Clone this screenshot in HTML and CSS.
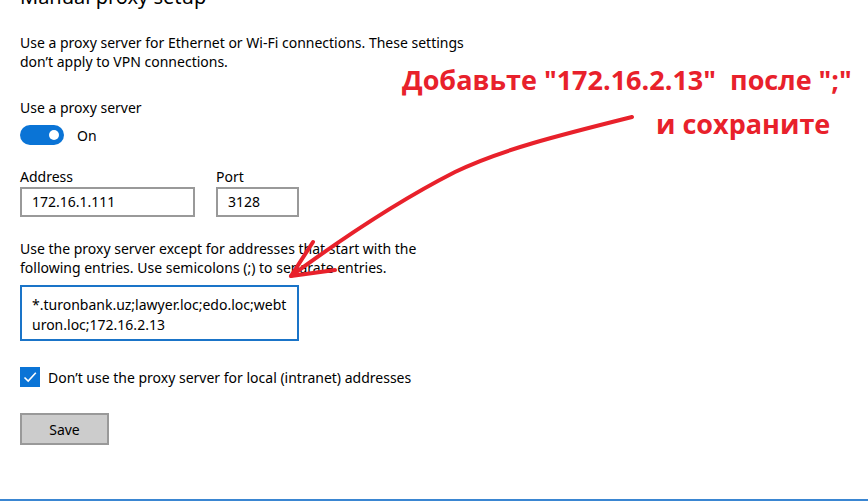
FILE: index.html
```html
<!DOCTYPE html>
<html lang="en">
<head>
<meta charset="utf-8">
<title>Manual proxy setup</title>
<link rel="stylesheet" href="styles.css">
</head>
<body>
<div class="page">
  <main class="settings">
    <h1 class="title">Manual proxy setup</h1>
    <p class="desc">Use a proxy server for Ethernet or Wi-Fi connections. These settings<br>don’t apply to VPN connections.</p>
    <div class="label label-proxy">Use a proxy server</div>
    <div class="toggle-row">
      <span class="toggle"><span class="knob"></span></span>
      <span class="toggle-text">On</span>
    </div>
    <div class="fields">
      <div class="field">
        <div class="label">Address</div>
        <div class="input input-address">172.16.1.111</div>
      </div>
      <div class="field">
        <div class="label">Port</div>
        <div class="input input-port">3128</div>
      </div>
    </div>
    <p class="desc desc-except">Use the proxy server except for addresses that start with the<br>following entries. Use semicolons (;) to separate entries.</p>
    <div class="textarea">*.turonbank.uz;lawyer.loc;edo.loc;webt<br>uron.loc;172.16.2.13</div>
    <div class="check-row">
      <span class="checkbox">
        <svg width="20" height="20" viewBox="0 0 20 20"><path d="M4.5 10.5 L8.2 14 L15.8 5.8" fill="none" stroke="#fff" stroke-width="1.6"/></svg>
      </span>
      <span class="check-text">Don’t use the proxy server for local (intranet) addresses</span>
    </div>
    <button class="save">Save</button>
  </main>
  <div class="note">
    <div class="note-line1">Добавьте "172.16.2.13"&nbsp; после ";"</div>
    <div class="note-line2">и сохраните</div>
  </div>
  <svg class="arrow" width="868" height="501" viewBox="0 0 868 501">
    <path d="M632 117 C 560 135, 500 150, 455 172 C 400 200, 340 240, 291 276" fill="none" stroke="#e8212b" stroke-width="4" stroke-linecap="round"/>
    <path d="M313 242 L 291 276 L 335 270" fill="none" stroke="#e8212b" stroke-width="4" stroke-linecap="round" stroke-linejoin="round"/>
  </svg>
  <div class="bottom-bar"></div>
</div>
</body>
</html>
```
FILE: styles.css
```css
html, body {
  margin: 0;
  padding: 0;
  background: #fff;
}
body {
  font-family: "Noto Sans", "Open Sans", sans-serif;
  color: #000;
  width: 868px;
  height: 501px;
  overflow: hidden;
}
.page {
  position: relative;
  width: 868px;
  height: 501px;
  overflow: hidden;
}
.settings {
  display: flex;
  flex-direction: column;
  align-items: flex-start;
  padding-left: 20px;
}
.title {
  margin: -17px 0 0 0;
  font-size: 20px;
  font-weight: normal;
  line-height: 28px;
}
.desc {
  margin: 22px 0 0 0;
  font-size: 14px;
  line-height: 19px;
}
.label {
  font-size: 14px;
  line-height: 19px;
}
.label-proxy {
  margin-top: 27px;
}
.toggle-row {
  display: flex;
  align-items: center;
  gap: 13px;
  margin-top: 8px;
}
.toggle {
  width: 44px;
  height: 20px;
  border-radius: 10px;
  background: #0a74d6;
  display: flex;
  align-items: center;
  justify-content: flex-end;
  padding-right: 5px;
  box-sizing: border-box;
}
.knob {
  width: 10px;
  height: 10px;
  border-radius: 50%;
  background: #fff;
}
.toggle-text {
  font-size: 14px;
  line-height: 19px;
}
.fields {
  display: flex;
  gap: 21px;
  margin-top: 22px;
}
.field .label {
  margin-bottom: 1px;
}
.input {
  box-sizing: border-box;
  height: 30px;
  border: 2px solid #999;
  font-size: 14px;
  line-height: 26px;
  padding-left: 10px;
}
.input-address { width: 175px; }
.input-port { width: 83px; }
.desc-except {
  margin-top: 22px;
}
.textarea {
  box-sizing: border-box;
  width: 279px;
  height: 56px;
  margin-top: 8px;
  border: 2px solid #1a74c8;
  font-size: 14px;
  line-height: 20px;
  padding: 8px 0 0 10px;
}
.check-row {
  display: flex;
  align-items: center;
  gap: 8px;
  margin-top: 26px;
}
.checkbox {
  width: 20px;
  height: 20px;
  background: #0a74d6;
  display: block;
}
.checkbox svg { display: block; }
.check-text {
  font-size: 14px;
  line-height: 19px;
}
.save {
  margin-top: 26px;
  box-sizing: border-box;
  width: 89px;
  height: 32px;
  background: #ccc;
  border: 2px solid #999;
  font-family: inherit;
  font-size: 14px;
  color: #000;
  padding: 0;
}
.note {
  position: absolute;
  left: 402px;
  top: 62px;
  width: 466px;
  color: #e8212b;
  font-family: "Open Sans", sans-serif;
  font-weight: bold;
  font-size: 27px;
  line-height: 36px;
  display: flex;
  flex-direction: column;
}
.note-line1 { white-space: pre; }
.note-line2 {
  margin-top: 8px;
  padding-left: 254px;
}
.arrow {
  position: absolute;
  left: 0;
  top: 0;
  pointer-events: none;
}
.bottom-bar {
  position: absolute;
  left: 0;
  right: 0;
  bottom: 0;
  height: 2px;
  background: #3a86d2;
}
```
